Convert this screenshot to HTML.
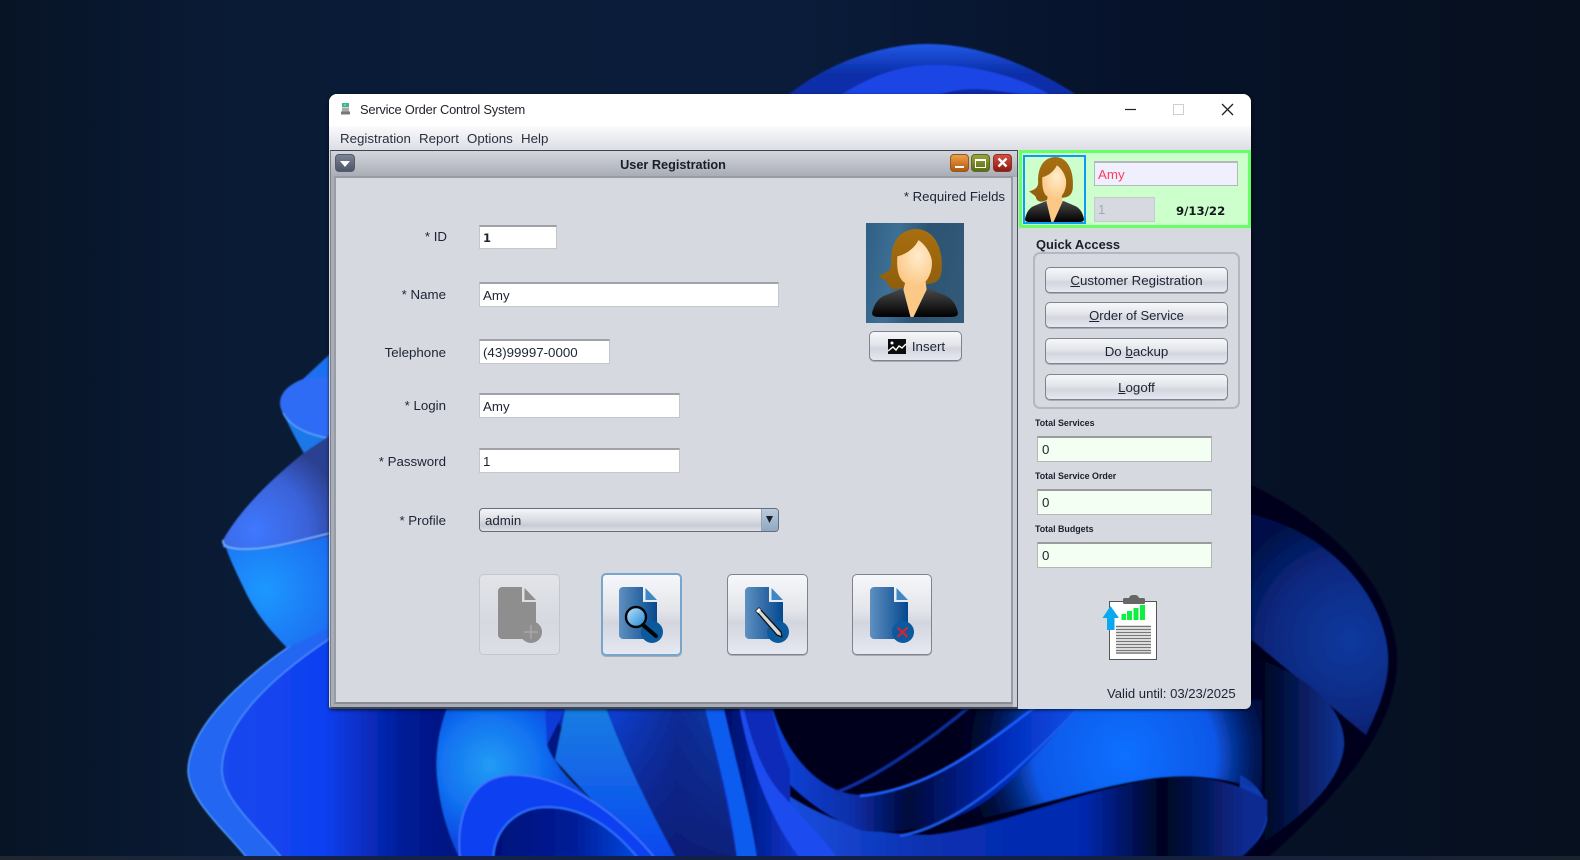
<!DOCTYPE html>
<html lang="en">
<head>
<meta charset="utf-8">
<title>Service Order Control System</title>
<style>
html,body{margin:0;padding:0;width:1580px;height:860px;overflow:hidden;background:#0a1a33}
body{position:relative;font-family:"Liberation Sans",Arial,sans-serif;font-size:13.3px;color:#1c2433}
.a{position:absolute;box-sizing:border-box}
.t{position:absolute;white-space:nowrap;line-height:16px;height:16px}
.l{position:absolute;white-space:nowrap;line-height:16px;height:16px;text-align:right;left:340px;width:106px}
.f{position:absolute;box-sizing:border-box;background:#fff;border:1px solid #c4c6cb;border-top:2px solid #9fa2a8;padding-left:3px;display:flex;align-items:center;white-space:nowrap}
.g{background:#f3fff2;border-color:#b4b7b4;border-top-color:#9a9c9a;padding-left:4px}
.b{position:absolute;box-sizing:border-box;border:1px solid #7f838c;border-radius:5px;background:linear-gradient(#f6f7fa 0%,#e3e5ea 45%,#d3d6de 60%,#e6e9f1 100%);display:flex;align-items:center;justify-content:center;white-space:nowrap;box-shadow:0 1px 0 #a9acb4}
.tl{position:absolute;white-space:nowrap;font-weight:bold;font-size:8.9px;line-height:12px;color:#1a1f2b}
.win{position:absolute;left:0;top:0;width:1580px;height:860px;filter:blur(.3px)}
</style>
</head>
<body>
<svg class="a" style="left:0;top:0" width="1580" height="860" viewBox="0 0 1580 860">
<defs>
<linearGradient id="bg" x1="0" x2="1" y1="0" y2="0"><stop offset="0" stop-color="#071426"/><stop offset=".15" stop-color="#0a1b36"/><stop offset=".5" stop-color="#0a1c3a"/><stop offset=".72" stop-color="#06122a"/><stop offset="1" stop-color="#06101e"/></linearGradient>
<linearGradient id="big" gradientUnits="userSpaceOnUse" x1="220" x2="450" y1="0" y2="0"><stop offset="0" stop-color="#1648ee"/><stop offset=".45" stop-color="#0f40f0"/><stop offset=".8" stop-color="#021c96"/><stop offset="1" stop-color="#011480"/></linearGradient>
<radialGradient id="cy" gradientUnits="userSpaceOnUse" cx="490" cy="765" r="85"><stop offset="0" stop-color="#229cf5"/><stop offset=".6" stop-color="#1170f0"/><stop offset="1" stop-color="#0b48e4"/></radialGradient>
<radialGradient id="pb" gradientUnits="userSpaceOnUse" cx="265" cy="590" r="80"><stop offset="0" stop-color="#1e98ff"/><stop offset="1" stop-color="#1a6cf0"/></radialGradient>
<radialGradient id="pu" gradientUnits="userSpaceOnUse" cx="255" cy="530" r="90"><stop offset="0" stop-color="#3f78ff"/><stop offset=".6" stop-color="#3a62d8"/><stop offset="1" stop-color="#2c4090"/></radialGradient>
<radialGradient id="rf" gradientUnits="userSpaceOnUse" cx="1350" cy="640" r="130"><stop offset="0" stop-color="#0c399f"/><stop offset=".6" stop-color="#08287f"/><stop offset="1" stop-color="#031148"/></radialGradient>
<linearGradient id="ra" gradientUnits="userSpaceOnUse" x1="1262" x2="1345" y1="0" y2="0"><stop offset="0" stop-color="#000520"/><stop offset="1" stop-color="#0e3499"/></linearGradient>
<radialGradient id="hl" gradientUnits="userSpaceOnUse" cx="1125" cy="755" r="165"><stop offset="0" stop-color="#0a70ff"/><stop offset=".55" stop-color="#0a58e8"/><stop offset="1" stop-color="#000a50" stop-opacity="0"/></radialGradient>
<linearGradient id="lo" gradientUnits="userSpaceOnUse" x1="780" x2="1270" y1="0" y2="0"><stop offset="0" stop-color="#1a50e0"/><stop offset=".3" stop-color="#0a30b0"/><stop offset=".62" stop-color="#0028b0"/><stop offset=".78" stop-color="#00041f"/><stop offset=".95" stop-color="#0a2a90"/></linearGradient>
<linearGradient id="bd" gradientUnits="userSpaceOnUse" x1="770" x2="1078" y1="0" y2="0"><stop offset="0" stop-color="#0a45e0"/><stop offset=".27" stop-color="#0a2ea8"/><stop offset=".45" stop-color="#00083a"/><stop offset=".75" stop-color="#002ab8"/><stop offset="1" stop-color="#1050e8"/></linearGradient>
<linearGradient id="s1" x1="0" x2="0" y1="0" y2="1"><stop offset="0" stop-color="#1a80e0"/><stop offset="1" stop-color="#0a48f0"/></linearGradient>
<linearGradient id="s2" x1="0" x2="1" y1="0" y2="0"><stop offset="0" stop-color="#0a44e0"/><stop offset=".55" stop-color="#0a2c98"/><stop offset="1" stop-color="#123ca8"/></linearGradient>
<linearGradient id="s2o" x1="0" x2="0" y1="0" y2="1"><stop offset="0" stop-color="#0a1a70" stop-opacity="0"/><stop offset="1" stop-color="#0a1a70" stop-opacity=".85"/></linearGradient>
<linearGradient id="s4" x1="0" x2="1" y1="0" y2="0"><stop offset="0" stop-color="#000c66"/><stop offset="1" stop-color="#0a38d0"/></linearGradient>
<linearGradient id="ai" x1="0" x2="1" y1="0" y2="0"><stop offset="0" stop-color="#00107a"/><stop offset=".55" stop-color="#001c96"/><stop offset="1" stop-color="#0048e0"/></linearGradient>
<linearGradient id="t1" x1="0" x2="0" y1="0" y2="1"><stop offset="0" stop-color="#2058e8"/><stop offset=".5" stop-color="#0b2fa8"/></linearGradient>
<filter id="bl" x="-5%" y="-5%" width="110%" height="110%"><feGaussianBlur stdDeviation=".8"/></filter>
<linearGradient id="tb" x1="0" x2="1" y1="0" y2="0"><stop offset="0" stop-color="#21272e"/><stop offset=".25" stop-color="#122248"/><stop offset=".6" stop-color="#121f48"/><stop offset="1" stop-color="#1a222e"/></linearGradient>
</defs>
<rect width="1580" height="860" fill="url(#bg)"/>
<g filter="url(#bl)">
<!-- top arcs -->
<path d="M780 102C820 65 880 44 927 44C985 44 1040 70 1088 102Z" fill="url(#t1)"/>
<path d="M830 102C870 75 900 65 935 65C980 65 1030 80 1062 102Z" fill="#1a44e6"/>
<path d="M925 102C940 92 960 89 975 89C1000 90 1030 95 1048 102Z" fill="#0d2ba8"/>
<!-- right shapes -->
<path d="M1240 480C1300 505 1396 570 1397 660C1397 740 1320 810 1268 858H700V480Z" fill="#00041f"/>
<path d="M1240 512C1330 528 1388 600 1388 660C1388 690 1375 715 1366 735L1240 630Z" fill="url(#rf)"/>
<path d="M1240 655C1290 665 1345 700 1344 745C1340 790 1290 825 1240 858Z" fill="url(#ra)"/>
<path d="M1240 775C1260 785 1268 800 1267 820C1265 835 1250 850 1240 858Z" fill="#0d3ab0"/>
<!-- highlight and lower band -->
<path d="M880 836C960 830 1060 795 1130 782C1170 774 1210 772 1262 790L1262 700L900 700Z" fill="url(#hl)"/>
<path d="M780 790C830 825 880 836 930 835C1000 828 1090 785 1170 778C1210 775 1240 785 1267 800C1270 830 1250 850 1240 858H780Z" fill="url(#lo)"/>
<!-- V band -->
<path d="M770 700C785 760 825 795 860 795C920 795 990 740 1040 700H1086C1040 750 1000 800 960 815C930 830 880 835 860 830C820 815 795 790 770 765Z" fill="url(#bd)"/>
<path d="M900 836C960 825 1020 770 1084 702" fill="none" stroke="#1a5cf0" stroke-width="2.2"/>
<path d="M860 796C930 790 985 745 1042 702" fill="none" stroke="#1a60ff" stroke-width="2.2"/>
<path d="M837 792C870 780 925 745 975 702" fill="none" stroke="#0a2f9a" stroke-width="3"/>
<!-- main blue -->
<path d="M340 615C260 660 190 720 188 770C188 800 225 830 247 858H560V700H340Z" fill="#2466f2"/>
<path d="M340 632C280 670 222 720 222 770C222 800 260 830 282 858H560V700H340Z" fill="url(#big)"/>
<path d="M340 632C280 670 222 720 222 770C222 800 260 830 282 858" fill="none" stroke="#4a8cff" stroke-width="1.4"/>
<path d="M340 615C260 660 190 720 188 770C188 800 225 830 247 858" fill="none" stroke="#4f9cff" stroke-width="1.4"/>
<!-- fold stripes -->
<path d="M545 700H770C776 730 782 750 790 770V858H640Z" fill="#0a2bb8"/>
<path d="M547 745L567 705L545 700Z" fill="#0f3ad8"/>
<path d="M567 700H603C625 760 650 810 676 858H645L555 760Z" fill="url(#s1)"/>
<path d="M603 700H703C715 750 728 810 737 858H676C650 810 625 760 603 700Z" fill="url(#s2)"/>
<path d="M603 700H703C715 750 728 810 737 858H676C650 810 625 760 603 700Z" fill="url(#s2o)"/>
<path d="M703 700H722C735 760 750 810 757 858H737C730 800 715 750 703 700Z" fill="#0a5cf0"/>
<path d="M722 700H742C745 760 770 820 800 858H757C750 810 735 760 722 700Z" fill="url(#s4)"/>
<path d="M742 700C748 730 760 770 780 792C800 815 820 835 838 858H800C770 820 748 760 738 700Z" fill="#1a4cf0"/>
<!-- cyan body -->
<path d="M450 700H545L547 745C552 760 565 775 575 785L655 858H460C450 840 440 810 437 775C435 750 440 725 450 700Z" fill="url(#cy)"/>
<!-- arcs -->
<path d="M460 858C455 810 475 775 513 775C560 775 610 805 655 858Z" fill="#0b3ff0" stroke="#3f74ff" stroke-width="1.6"/>
<path d="M493 858C495 825 520 807 547 807C585 807 615 830 638 858Z" fill="url(#ai)" stroke="#2a70ff" stroke-width="2"/>
<!-- left petals -->
<path d="M303 379L345 340V385Z" fill="#1f70f0"/>
<path d="M283 413C295 432 315 437 345 441V505L329 497C315 470 300 450 283 413Z" fill="#1a78e8"/>
<path d="M280 403C280 392 290 384 303 379L345 375V441C320 437 295 430 285 418C282 412 280 408 280 403Z" fill="#2f6cf5"/>
<path d="M283 413C292 430 315 437 345 441" fill="none" stroke="#5fa8ff" stroke-width="1.3"/>
<path d="M226 548C232 565 240 580 247 595C260 620 275 635 287 648L345 620V532C300 545 250 552 226 548Z" fill="url(#pb)"/>
<path d="M223 540C240 510 270 480 305 452L345 425V532C300 545 240 555 223 547Z" fill="url(#pu)"/>
<path d="M223 540C222 546 228 548 240 549C270 550 300 540 335 532" fill="none" stroke="#6fb4ff" stroke-width="1.6"/>
</g>
<rect y="856" width="1580" height="4" fill="url(#tb)"/>
</svg>

<svg width="0" height="0" style="position:absolute">
<defs>
<linearGradient id="hair" x1="0" x2="0" y1="0" y2="1"><stop offset="0" stop-color="#a86f10"/><stop offset="1" stop-color="#8f5d0c"/></linearGradient>
<radialGradient id="face" cx=".6" cy=".35" r=".75"><stop offset="0" stop-color="#ffeccb"/><stop offset="1" stop-color="#fbc47e"/></radialGradient>
<linearGradient id="jack" x1="0" x2="0" y1="0" y2="1"><stop offset="0" stop-color="#4a4a4a"/><stop offset="1" stop-color="#000"/></linearGradient>
<symbol id="woman" viewBox="0 0 97 99" preserveAspectRatio="none">
<path d="M49 6C30 7 24 24 25 40C25 47 20 50 12 52C17 56 22 58 22 61C24 66 30 67 36 64L64 60C71 59 75 54 75 45C76 25 68 6 49 6Z" fill="url(#hair)"/>
<path d="M6 89C8 80 12 75 18 72L36 65H62L79 72C85 75 89 80 91 89C91 92 89 93 84 93H13C8 93 6 92 6 89Z" fill="url(#jack)"/>
<path d="M39 58H59L60 66L47 93H44L37 66Z" fill="#fbc886"/>
<path d="M52 17C48 25 40 31 31 33C30 48 33 57 40 60C46 63 53 62 58 59C64 53 66 44 65 36C63 28 58 21 52 17Z" fill="url(#face)"/>
</symbol>
<linearGradient id="docg" x1="0" x2="1" y1="0" y2="0"><stop offset="0" stop-color="#5f90c0"/><stop offset="1" stop-color="#05488f"/></linearGradient>
<linearGradient id="lens" x1="0" x2="1" y1="0" y2="1"><stop offset="0" stop-color="#bfe4fa"/><stop offset="1" stop-color="#1f86d6"/></linearGradient>
<symbol id="doc" viewBox="0 0 50 60" overflow="visible">
<path d="M4 0H24V15H38V48C38 50 36 52 34 52H4C2 52 0 50 0 48V4C0 2 2 0 4 0Z" fill="url(#docg)"/>
<path d="M26.5 1L38 13H26.5Z" fill="#3f86c4"/>
<circle cx="33" cy="45" r="11" fill="#0c5a9e"/>
</symbol>
</defs>
</svg>

<div class="win">
<!-- window -->
<div class="a" style="left:329px;top:94px;width:922px;height:615px;background:#d6d9e0;border-radius:8px 8px 6px 3px;box-shadow:0 1px 3px rgba(0,0,0,.7);overflow:hidden">
  <div class="a" style="left:0;top:0;width:922px;height:32px;background:#fff"></div>
  <div class="a" style="left:0;top:32px;width:922px;height:24px;background:linear-gradient(#fbfbfc,#dcdee4)"></div>
</div>

<!-- app icon -->
<svg class="a" style="left:339px;top:101px" width="12" height="16" viewBox="0 0 12 16"><rect x="3" y="2" width="7" height="4" fill="#4fae88"/><rect x="5" y="3" width="2" height="2" fill="#30e0e0"/><rect x="3" y="6.500" width="7" height="4" fill="#a9aba9"/><rect x="2" y="10.500" width="9" height="3" fill="#777"/></svg>
<div class="t" style="left:360px;top:102px;font-size:12.9px;letter-spacing:-.22px;color:#20242c">Service Order Control System</div>
<!-- caption buttons -->
<svg class="a" style="left:1120px;top:100px" width="120" height="20" viewBox="0 0 120 20"><path d="M5 9.500H16" stroke="#222" stroke-width="1.2"/><rect x="53.500" y="4.500" width="10" height="10" fill="none" stroke="#cfcfd2"/><path d="M102 4L113 15M113 4L102 15" stroke="#222" stroke-width="1.3"/></svg>

<!-- menu -->
<div class="t" style="left:340px;top:131px;color:#2a3040">Registration</div>
<div class="t" style="left:419px;top:131px;color:#2a3040">Report</div>
<div class="t" style="left:467px;top:131px;color:#2a3040">Options</div>
<div class="t" style="left:521px;top:131px;color:#2a3040">Help</div>

<!-- internal frame -->
<div class="a" style="left:330px;top:150px;width:688px;height:559px;background:#a9adb6;border-top:1px solid #3d4454;border-right:1px solid #4a5060;border-bottom:2px solid #3f444f;border-left:1px solid #7a7f8a"></div>
<div class="a" style="left:331px;top:151px;width:686px;height:26px;background:linear-gradient(#d3d5db,#c0c3ca 45%,#a7abb5)"></div>
<div class="a" style="left:1013px;top:177px;width:4px;height:530px;background:#c9ccd4"></div>
<div class="a" style="left:334px;top:176px;width:679px;height:528px;background:#d6d9e0;border:2px solid #989ca6;border-bottom-color:#878c96"></div>
<!-- frame icon -->
<div class="a" style="left:335px;top:154px;width:20px;height:18px;border-radius:4px;background:linear-gradient(#7b8294,#4e5568);border:1px solid #555c6e"></div>
<svg class="a" style="left:339px;top:160px" width="12" height="8" viewBox="0 0 12 8"><path d="M1 1H11L6 7Z" fill="#fff"/></svg>
<div class="t" style="left:573px;width:200px;text-align:center;top:157px;font-weight:bold;color:#1a1e28;font-size:12.7px">User Registration</div>
<!-- frame buttons -->
<div class="a" style="left:950px;top:154px;width:19px;height:18px;border-radius:4px;background:linear-gradient(#efa04a,#b5560c);border:1px solid #8d5a20"></div>
<div class="a" style="left:955px;top:166px;width:9px;height:2px;background:#fff"></div>
<div class="a" style="left:971px;top:154px;width:19px;height:18px;border-radius:4px;background:linear-gradient(#9aa53a,#5c6b14);border:1px solid #5f6b22"></div>
<div class="a" style="left:975px;top:159px;width:11px;height:9px;border:1px solid #fff;border-top-width:2px"></div>
<div class="a" style="left:993px;top:154px;width:19px;height:18px;border-radius:4px;background:linear-gradient(#d65040,#8c1a12);border:1px solid #8c3028"></div>
<svg class="a" style="left:997px;top:157px" width="11" height="11" viewBox="0 0 11 11"><path d="M1.500 1.500L9.500 9.500M9.500 1.500L1.500 9.500" stroke="#fff" stroke-width="2.4"/></svg>

<!-- form -->
<div class="t" style="left:805px;width:200px;text-align:right;top:189px;font-size:13.2px">* Required Fields</div>
<div class="l" style="top:229px;left:341px">* ID</div>
<div class="f" style="left:479px;top:225px;width:78px;height:24px;font-family:'DejaVu Sans',sans-serif;font-weight:bold;font-size:11.5px">1</div>
<div class="l" style="top:287px">* Name</div>
<div class="f" style="left:479px;top:282px;width:300px;height:25px">Amy</div>
<div class="l" style="top:345px">Telephone</div>
<div class="f" style="left:479px;top:339px;width:131px;height:25px">(43)99997-0000</div>
<div class="l" style="top:398px">* Login</div>
<div class="f" style="left:479px;top:393px;width:201px;height:25px">Amy</div>
<div class="l" style="top:454px">* Password</div>
<div class="f" style="left:479px;top:448px;width:201px;height:25px;padding-top:1px">1</div>
<div class="l" style="top:513px">* Profile</div>
<div class="a" style="left:479px;top:508px;width:300px;height:24px;border:1px solid #666c78;border-radius:4px;background:linear-gradient(#f4f5f8,#dadde3 50%,#c8cbd3 75%,#dfe2ea);padding-left:5px;line-height:24px;overflow:hidden">admin
  <div class="a" style="right:0;top:0;width:17px;height:22px;background:linear-gradient(#bccbdb,#8fa8c4);border-left:1px solid #9aa4b2"></div>
  <svg class="a" style="right:5px;top:7px" width="7" height="7" viewBox="0 0 7 7"><path d="M0 0H7L3.500 7Z" fill="#1a1e28"/></svg>
</div>

<!-- photo -->
<div class="a" style="left:866px;top:223px;width:98px;height:100px;background:linear-gradient(100deg,#2f5f85,#3e6f95 30%,#2b5373 55%,#345a78)">
  <svg class="a" style="left:0;top:0" width="98" height="100"><use href="#woman" width="98" height="100"/></svg>
</div>
<div class="b" style="left:869px;top:331px;width:93px;height:30px;padding-left:2px"><svg width="18" height="15" viewBox="0 0 18 15" style="margin-right:6px"><rect width="18" height="15" fill="#0c0c0c"/><path d="M0 12L5 8L8 11L11 7L14 9L18 5" fill="none" stroke="#fff" stroke-width="1.4"/><circle cx="4" cy="4" r="1.500" fill="#fff"/></svg>Insert</div>

<!-- CRUD buttons -->
<div class="b" style="left:479px;top:574px;width:81px;height:81px;border-color:#c3c6cd;box-shadow:none;background:linear-gradient(#e2e4e9,#d6d9e0 60%,#dcdfe6)"></div>
<svg class="a" style="left:498px;top:587px" width="50" height="60" viewBox="0 0 50 60"><path d="M4 0H24V15H38V48C38 50 36 52 34 52H4C2 52 0 50 0 48V4C0 2 2 0 4 0Z" fill="#8e8e8e"/><path d="M26.500 1L38 13H26.500Z" fill="#8e8e8e"/><circle cx="33" cy="45" r="11" fill="#8f8f8f"/><path d="M33 38V52M26 45H40" stroke="#a8a8a8" stroke-width="1.500"/></svg>

<div class="b" style="left:601px;top:573px;width:81px;height:83px;border:2px solid #78a5cc"></div>
<svg class="a" style="left:619px;top:587px" width="50" height="60" viewBox="0 0 50 60"><use href="#doc" width="50" height="60"/><circle cx="17" cy="30" r="10" fill="url(#lens)" stroke="#050505" stroke-width="2.400"/><path d="M24 38L37 49" stroke="#050505" stroke-width="4" stroke-linecap="round"/></svg>

<div class="b" style="left:727px;top:574px;width:81px;height:81px"></div>
<svg class="a" style="left:745px;top:587px" width="50" height="60" viewBox="0 0 50 60"><use href="#doc" width="50" height="60"/><path d="M11 24L14 21L36 45L37 50L32 48Z" fill="#d8d8dc" stroke="#111" stroke-width="1.300" stroke-linejoin="round"/><path d="M11 24L14 21L16 23L13 26Z" fill="#fff"/></svg>

<div class="b" style="left:852px;top:574px;width:80px;height:81px"></div>
<svg class="a" style="left:870px;top:587px" width="50" height="60" viewBox="0 0 50 60"><use href="#doc" width="50" height="60"/><path d="M27.500 40.500L37.500 50M37.500 40.500L27.500 50" stroke="#e0202c" stroke-width="2"/></svg>

<!-- green panel -->
<div class="a" style="left:1019px;top:150px;width:232px;height:78px;background:#ccffcc;border:3px solid #66ff66"></div>
<div class="a" style="left:1023px;top:155px;width:63px;height:69px;border:2px solid #0a9cf5"></div>
<svg class="a" style="left:1025px;top:157px" width="59" height="65" viewBox="6 6 85 87" preserveAspectRatio="none"><use href="#woman" x="0" y="0" width="97" height="99"/></svg>
<div class="f" style="left:1094px;top:161px;width:144px;height:25px;background:#efeffd;border-color:#b5b6be;color:#ff3d5c">Amy</div>
<div class="f" style="left:1094px;top:197px;width:61px;height:25px;background:#d6d9e0;border:1px solid #c6c9d0;color:#a4a8b0">1</div>
<div class="t" style="left:1176px;top:203px;font-family:'DejaVu Sans',sans-serif;font-weight:bold;font-size:11.7px;color:#14181c">9/13/22</div>

<!-- quick access -->
<div class="t" style="left:1036px;top:237px;font-weight:bold;font-size:12.9px;color:#1a1f2b">Quick Access</div>
<div class="a" style="left:1033px;top:252px;width:207px;height:157px;border:2px solid #b4b7be;border-radius:7px"></div>
<div class="b" style="left:1045px;top:267px;width:183px;height:26px"><span><u>C</u>ustomer Registration</span></div>
<div class="b" style="left:1045px;top:302px;width:183px;height:26px"><span style="font-size:13px"><u>O</u>rder of Service</span></div>
<div class="b" style="left:1045px;top:338px;width:183px;height:26px"><span>Do <u>b</u>ackup</span></div>
<div class="b" style="left:1045px;top:374px;width:183px;height:26px"><span><u>L</u>ogoff</span></div>

<div class="tl" style="left:1035px;top:417px">Total Services</div>
<div class="f g" style="left:1037px;top:436px;width:175px;height:26px">0</div>
<div class="tl" style="left:1035px;top:470px">Total Service Order</div>
<div class="f g" style="left:1037px;top:489px;width:175px;height:26px">0</div>
<div class="tl" style="left:1035px;top:523px">Total Budgets</div>
<div class="f g" style="left:1037px;top:542px;width:175px;height:26px">0</div>

<!-- clipboard -->
<svg class="a" style="left:1100px;top:592px" width="62" height="72" viewBox="1100 592 62 72">
<rect x="1109.500" y="601.500" width="47" height="58" fill="#fff" stroke="#555" stroke-width="1"/>
<rect x="1123" y="598" width="22" height="6" rx="1.500" fill="#666"/><path d="M1129 598C1130 595 1132 595 1134 595C1136 595 1138 595 1139 598Z" fill="#666"/>
<g fill="#0cf040"><rect x="1121.500" y="614" width="4.500" height="6"/><rect x="1127" y="611" width="5" height="9"/><rect x="1133.500" y="608" width="5" height="12"/><rect x="1140" y="605" width="5" height="15"/></g>
<g stroke="#777" stroke-width="1.500"><path d="M1116 626.500H1151M1116 629.500H1151M1116 632.500H1151M1116 635.500H1151M1116 638.500H1151M1116 641.500H1151M1116 644.500H1151M1116 647.500H1151M1116 650.500H1151M1116 653H1151"/></g>
<path d="M1110.500 606L1119 618H1114.500V630H1107V618H1102.500Z" fill="#0aa8ee"/>
</svg>

<div class="t" style="left:1107px;top:686px;font-size:13.1px">Valid until: 03/23/2025</div>
</div>
</body>
</html>
